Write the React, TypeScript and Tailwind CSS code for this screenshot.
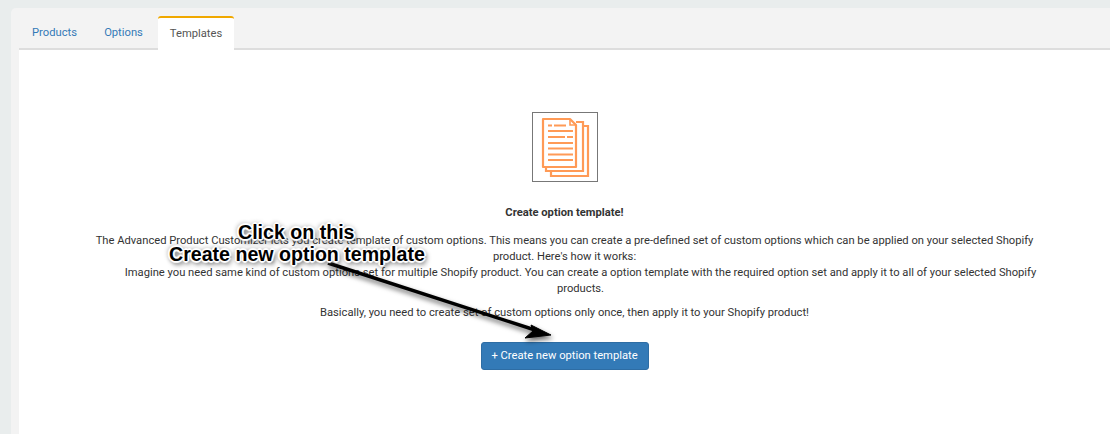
export default function App() {
  const halo = "[text-shadow:0_0_2px_#fff,0_0_2px_#fff,0_0_2px_#fff,1px_1px_1px_#fff,-1px_-1px_1px_#fff,1px_-1px_1px_#fff,-1px_1px_1px_#fff,2px_0_1px_#fff,-2px_0_1px_#fff,0_2px_1px_#fff,0_-2px_1px_#fff,2px_3px_5px_#333,-1px_-1px_5px_#888]";
  return (
    <div className="relative h-[434px] w-[1110px] overflow-hidden bg-[#e9eded] pl-[11px] pt-2 font-['Roboto',sans-serif] text-[11.2px] leading-4 text-[#333]">
      <div className="h-full rounded-tl-[5px] bg-[#f3f3f3] pl-2">
        <div className="flex h-[42px] items-end border-b-2 border-[#dddddd]">
          <div className="flex h-[33px] w-[65px] items-center justify-center pl-[6px] pt-[3px] text-[#337ab7]">Products</div>
          <div className="flex h-[33px] w-[74px] items-center justify-center pl-[5px] pt-[3px] text-[#337ab7]">Options</div>
          <div className="-mb-0.5 flex h-[34px] w-[76px] items-center justify-center rounded-t-[3px] border-t-2 border-[#f0a800] bg-white pb-px text-[#555]">Templates</div>
        </div>
        <div className="flex h-[385px] flex-col items-center bg-white pt-[62px]">
          <div className="ml-px flex h-[70px] w-[66px] items-center justify-center border border-[#777]">
            <svg width="50" height="62" viewBox="0 0 50 62" fill="none" stroke="#ff9a56" strokeWidth="2.2">
              <path d="M38 10h10v50H11v-5" />
              <path d="M36 6h7v49H6v-4" fill="#fff" />
              <path d="M3 3h27l6 6v42H3z" fill="#fff" strokeLinejoin="round" />
              <path d="M30 3v6h6" strokeWidth="1.6" />
              <path d="M8 9.5h4M14 9.5h12M8 15h25M8 21h17M27 21h6M8 27h25M8 32.5h25M8 38.5h25M8 44h25" strokeWidth="1.8" />
            </svg>
          </div>
          <div className="mt-[23px] font-bold">Create option template!</div>
          <div className="mt-[12px] w-[945px] text-center">
            The Advanced Product Customizer lets you create template of custom options. This means you can create a pre-defined set of custom options which can be applied on your selected Shopify product. Here's how it works:
          </div>
          <div className="w-[945px] pl-8 text-center">
            Imagine you need same kind of custom options set for multiple Shopify product. You can create a option template with the required option set and apply it to all of your selected Shopify products.
          </div>
          <div className="mt-2">Basically, you need to create set of custom options only once, then apply it to your Shopify product!</div>
          <button className="mt-[21px] h-7 w-[168px] rounded-[3px] border border-[#2e6da4] bg-[#337ab7] font-normal text-white">+ Create new option template</button>
        </div>
      </div>

      <svg className="absolute left-0 top-0" width="1110" height="434" fill="none">
        <defs>
          <filter id="s" x="-10%" y="-20%" width="120%" height="150%">
            <feDropShadow dx="1" dy="3" stdDeviation="2.5" floodColor="#000" floodOpacity="0.6" />
          </filter>
        </defs>
        <g filter="url(#s)">
          <path d="M328 263 L535 330" stroke="#000" strokeWidth="3.5" />
          <path d="M551 335 L531 325 L533 331 L525 338 Z" fill="#000" stroke="#000" strokeWidth="1" />
        </g>
      </svg>
      <div className={`absolute left-[238px] top-[221px] text-[19.6px] font-bold leading-[22px] text-black font-['Liberation_Sans',sans-serif] ${halo}`}>Click on this</div>
      <div className={`absolute left-[169px] top-[243px] text-[19.6px] font-bold leading-[22px] text-black font-['Liberation_Sans',sans-serif] ${halo}`}>Create new option template</div>
    </div>
  );
}
